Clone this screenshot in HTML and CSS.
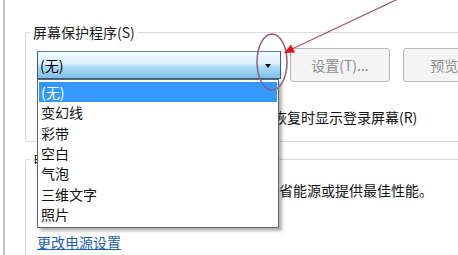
FILE: index.html
```html
<!DOCTYPE html>
<html lang="zh-CN">
<head>
<meta charset="utf-8">
<title>屏幕保护程序设置</title>
<link rel="stylesheet" href="styles.css">
</head>
<body>
<div class="window">
  <fieldset class="group group-saver">
    <legend class="group-title">屏幕保护程序(S)</legend>
    <div class="row row-top">
      <div class="combo-wrap">
        <div class="combo">
          <span class="combo-value">(无)</span>
          <span class="combo-arrow"></span>
        </div>
        <ul class="dropdown">
          <li class="item selected">(无)</li>
          <li class="item">变幻线</li>
          <li class="item">彩带</li>
          <li class="item">空白</li>
          <li class="item">气泡</li>
          <li class="item">三维文字</li>
          <li class="item">照片</li>
        </ul>
      </div>
      <button class="btn btn-settings" disabled>设置(T)...</button>
      <button class="btn btn-preview" disabled>预览(V)</button>
    </div>
    <div class="row row-wait">
      <span class="wait-label">等待(W):</span>
      <span class="spin">1</span>
      <span class="unit">分钟</span>
      <span class="check"></span>
      <span class="check-label">在恢复时显示登录屏幕(R)</span>
    </div>
  </fieldset>
  <fieldset class="group group-power">
    <legend class="group-title">电源管理</legend>
    <p class="power-text">通过调整显示亮度和其他电源设置以节省能源或提供最佳性能。</p>
    <a class="power-link" href="#">更改电源设置</a>
  </fieldset>
</div>
<svg class="annot" width="458" height="255" viewBox="0 0 458 255">
  <ellipse cx="272" cy="62" rx="15" ry="28" fill="none" stroke="#8e5f8f" stroke-width="1.5"/>
  <line x1="398" y1="-1" x2="292" y2="49" stroke="#a55a5a" stroke-width="1.3"/>
  <polygon points="284,53 295,52.5 291,44.5" fill="#e01515"/>
</svg>
</body>
</html>
```
FILE: styles.css
```css
html, body {
  margin: 0;
  padding: 0;
}
body {
  width: 458px;
  height: 255px;
  overflow: hidden;
  background: #ffffff;
  position: relative;
  font-family: "Noto Sans CJK SC", "Noto Sans", sans-serif;
  font-size: 14px;
  line-height: 20px;
  color: #111111;
}
.window {
  margin-left: 3px;
  height: 255px;
  border-left: 2px solid #c4c4c4;
  padding: 24px 0 0 20px;
  box-sizing: border-box;
}
.group {
  width: 520px;
  margin: 0;
  border: 1px solid #d5dbe0;
  border-radius: 3px;
  box-sizing: border-box;
  min-width: 0;
}
.group-title {
  padding: 0 3px;
  margin-left: -7px;
  line-height: 16px;
  font-size: 14px;
  color: #1a1a1a;
}
.group-saver {
  padding: 8px 0 14px 11px;
}
.row {
  display: flex;
  align-items: center;
}
.combo-wrap {
  position: relative;
  width: 244px;
  flex: none;
}
.combo {
  height: 28px;
  box-sizing: border-box;
  border: 1px solid #2f5f86;
  border-top-color: #5d87a8;
  background: linear-gradient(to bottom, #f3faff 0%, #dcf0fb 45%, #b0dbf4 55%, #7fc0e8 100%);
  display: flex;
  align-items: center;
  justify-content: space-between;
  padding: 0 9px 0 2px;
  color: #000;
}
.combo-arrow {
  width: 0;
  height: 0;
  border-left: 3.5px solid transparent;
  border-right: 3.5px solid transparent;
  border-top: 4px solid #111;
  margin-top: 1px;
}
.dropdown {
  position: absolute;
  top: 100%;
  left: 0;
  width: 242px;
  margin: 0;
  padding: 2px 1px 3px 1px;
  list-style: none;
  background: #ffffff;
  border: 1px solid #646464;
  box-sizing: border-box;
  box-shadow: 3px 3px 3px rgba(0, 0, 0, 0.3);
  z-index: 2;
}
.item {
  height: 20.33px;
  line-height: 20px;
  padding-left: 2px;
  color: #111;
}
.item.selected {
  background: #3399ff;
  color: #ffffff;
}
.btn {
  height: 34px;
  width: 100px;
  flex: none;
  box-sizing: border-box;
  border: 1px solid #b4b8bb;
  border-radius: 3px;
  background: #f4f4f4;
  color: #8d8d8d;
  font-family: inherit;
  font-size: 14px;
  padding: 0;
}
.btn-settings {
  margin-left: 9px;
}
.btn-preview {
  margin-left: 13px;
}
.row-wait {
  margin-top: 25px;
  height: 20px;
}
.wait-label {
  width: 56px;
}
.spin {
  width: 50px;
  height: 20px;
  border: 1px solid #abadb3;
  box-sizing: border-box;
  margin-left: 6px;
  line-height: 18px;
  padding-left: 3px;
}
.unit {
  margin-left: 6px;
}
.check {
  width: 13px;
  height: 13px;
  border: 1px solid #8e8f8f;
  box-sizing: border-box;
  margin-left: 59px;
}
.check-label {
  margin-left: 4px;
}
.group-power {
  margin-top: 9px;
  padding: 13px 0 40px 11px;
}
.power-text {
  margin: 0 0 0 4px;
  line-height: 20px;
}
.power-link {
  display: inline-block;
  margin-top: 32px;
  color: #1a5fb4;
  text-decoration: underline;
  line-height: 20px;
}
.annot {
  position: absolute;
  top: 0;
  left: 0;
  pointer-events: none;
  z-index: 5;
}
```
